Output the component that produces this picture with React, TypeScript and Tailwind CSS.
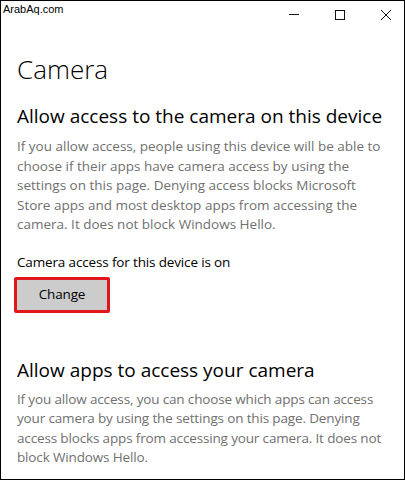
import React from "react";

const WindowControls: React.FC = () => {
  return (
    <div className="flex -mr-[5px]">
      {/* minimize */}
      <div className="w-[46px] h-[27px] flex items-center justify-center">
        <svg width="10" height="10" viewBox="0 0 10 10">
          <line x1="0" y1="4.5" x2="10" y2="4.5" stroke="#111" strokeWidth="1" />
        </svg>
      </div>
      {/* maximize */}
      <div className="w-[46px] h-[27px] flex items-center justify-center">
        <svg width="10" height="10" viewBox="0 0 10 10">
          <rect x="0.5" y="0.5" width="9" height="9" fill="none" stroke="#111" strokeWidth="1" />
        </svg>
      </div>
      {/* close */}
      <div className="w-[46px] h-[27px] flex items-center justify-center">
        <svg width="10" height="10" viewBox="0 0 10 10">
          <path d="M0 0 L10 10 M10 0 L0 10" stroke="#111" strokeWidth="1" />
        </svg>
      </div>
    </div>
  );
};

const App: React.FC = () => {
  return (
    <div
      className="relative w-[405px] h-[480px] overflow-hidden bg-white border border-black"
      style={{ fontFamily: '"Open Sans", "Noto Sans", sans-serif' }}
    >
      {/* watermark */}
      <div
        className="absolute left-[2px] top-[2px] text-[11px] leading-[13px] text-black"
        style={{ fontFamily: '"Liberation Sans", Arial, sans-serif' }}
      >
        ArabAq.com
      </div>

      {/* Title bar */}
      <div className="flex justify-end h-[27px]">
        <WindowControls />
      </div>

      {/* Content */}
      <div className="px-[16px]">
        <h1 className="mt-[24px] text-[26px] leading-[34px] font-light text-black">Camera</h1>

        <h2 className="mt-[17px] text-[19px] leading-[26px] text-black">
          Allow access to the camera on this device
        </h2>
        <p className="mt-[8px] w-[368px] text-[13.5px] leading-[19.5px] text-[#707070]">
          If you allow access, people using this device will be able to choose if their apps
          have camera access by using the settings on this page. Denying access blocks Microsoft
          Store apps and most desktop apps from accessing the camera. It does not block Windows
          Hello.
        </p>

        <div className="mt-[17px] text-[13.5px] leading-[20px] tracking-[-0.15px] text-black">
          Camera access for this device is on
        </div>
        <button className="mt-[5px] -ml-[3px] w-[96px] h-[36px] bg-[#cccccc] border-[3px] border-[#e0161b] rounded-[2px] text-[13.5px] tracking-[-0.15px] text-black">
          Change
        </button>

        <h2 className="mt-[44px] text-[19px] leading-[26px] text-black">
          Allow apps to access your camera
        </h2>
        <p className="mt-[7px] text-[13.5px] leading-[19.5px] tracking-[-0.15px] text-[#707070]">
          If you allow access, you can choose which apps can access your camera by using the
          settings on this page. Denying access blocks apps from accessing your camera. It does
          not block Windows Hello.
        </p>
      </div>
    </div>
  );
};

export default App;
